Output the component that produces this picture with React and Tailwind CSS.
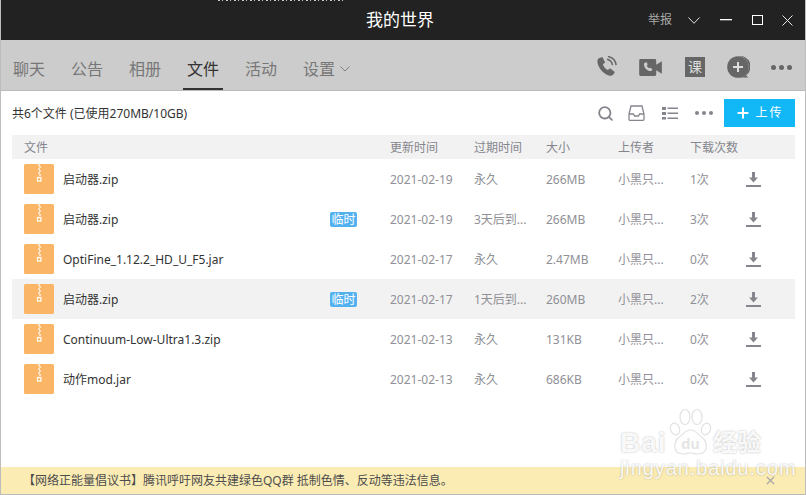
import React from 'react'
import { Search, Plus, X } from 'lucide-react'

const font = 'font-["Noto_Sans","Noto_Sans_CJK_SC",sans-serif]'

const tabs = ['聊天', '公告', '相册', '文件', '活动']

const files = [
    { name: '启动器.zip', date: '2021-02-19', expire: '永久', size: '266MB', count: '1次' },
    { name: '启动器.zip', temp: true, date: '2021-02-19', expire: '3天后到...', size: '266MB', count: '3次' },
    { name: 'OptiFine_1.12.2_HD_U_F5.jar', date: '2021-02-17', expire: '永久', size: '2.47MB', count: '0次' },
    { name: '启动器.zip', temp: true, date: '2021-02-17', expire: '1天后到...', size: '260MB', count: '2次', active: true },
    { name: 'Continuum-Low-Ultra1.3.zip', date: '2021-02-13', expire: '永久', size: '131KB', count: '0次' },
    { name: '动作mod.jar', date: '2021-02-13', expire: '永久', size: '686KB', count: '0次' },
]

const ZipIcon = () => (
    <svg width="30" height="30" viewBox="0 0 30 30" className="shrink-0">
        <rect width="30" height="30" rx="1.5" fill="#fab666" />
        <path d="M14 0h2v2h-2zM15 2h2v2h-2zM14 4h2v2h-2zM15 6h2v2h-2zM14 8h2v2h-2zM15 10h2v2h-2z" fill="#fde3c4" />
        <rect x="13.500" y="13.500" width="3.400" height="3.600" fill="none" stroke="#fff" strokeWidth="1.200" />
    </svg>
)

const DownloadIcon = () => (
    <svg width="15" height="15" viewBox="0 0 15 15" fill="#85858d">
        <path d="M6 0h3v5.500h3L7.500 10.500 3 5.500h3z" />
        <rect x="0" y="13" width="15" height="2" />
    </svg>
)

const ThreeDots = ({ color, size }) => (
    <div className="flex items-center gap-[3px]">
        {[0, 1, 2].map((i) => (
            <span key={i} className={`rounded-full ${color} ${size}`} />
        ))}
    </div>
)

const FileRow = ({ file }) => (
    <div className={`grid h-10 grid-cols-[378px_84px_72px_72px_72px_55px_1fr] items-center text-xs text-[#909096] ${file.active ? 'bg-[#f2f2f2]' : ''}`}>
        <div className="flex items-center pl-3 pr-[33px]">
            <ZipIcon />
            <span className="ml-[9px] pt-[2px] text-[#333]">{file.name}</span>
            {file.temp && (
                <span className="ml-auto rounded-[2px] bg-[#54b1f0] px-[1.5px] text-xs leading-[15px] text-white">临时</span>
            )}
        </div>
        <div className="pt-[2px]">{file.date}</div>
        <div className="pt-[2px]">{file.expire}</div>
        <div className="pt-[2px]">{file.size}</div>
        <div className="pt-[2px]">小黑只...</div>
        <div className="pt-[2px]">{file.count}</div>
        <div className="pl-[1px]">
            <DownloadIcon />
        </div>
    </div>
)

const Watermark = () => (
    <div className="pointer-events-none absolute left-[619px] top-[408px] flex h-[70px] w-[146px] flex-col text-white/90 [text-shadow:0_0_2px_rgba(0,0,0,0.3)]">
        <div className="flex h-[48px] items-end">
            <span className="w-[49px] font-['Liberation_Sans',sans-serif] text-[28px] leading-[26px] font-bold tracking-[1px]">Bai</span>
            <div className="relative h-[48px] w-[43px]">
                <svg width="43" height="48" viewBox="0 0 43 48" fill="#fff" stroke="#e2e2e2" strokeWidth="1.200">
                    <ellipse cx="6" cy="21" rx="4.500" ry="6" transform="rotate(-20 6 21)" />
                    <ellipse cx="16" cy="9" rx="5" ry="7.500" />
                    <ellipse cx="28" cy="9" rx="5" ry="7.500" />
                    <ellipse cx="37" cy="21" rx="4.500" ry="6" transform="rotate(20 37 21)" />
                    <path d="M21.500 22c5 0 7 4 11 7 6 4 8 17-4 17-3 0-5-1-7-1s-4 1-7 1c-12 0-10-13-4-17 4-3 6-7 11-7z" />
                </svg>
                <span className="absolute inset-x-0 bottom-[2px] text-center font-['Liberation_Sans',sans-serif] text-[15px] leading-[20px] font-bold text-[#e4e4e4] [text-shadow:none]">du</span>
            </div>
            <span className="ml-[1px] text-[24px] leading-[28px] font-bold">经验</span>
        </div>
        <span className="mt-[2px] whitespace-nowrap font-['Liberation_Sans',sans-serif] text-[20px] leading-[20px] tracking-[0.9px]">jingyan.baidu.com</span>
    </div>
)

const App = () => {
    return (
        <div className={`relative flex h-[495px] w-[806px] flex-col overflow-hidden border-x border-[#bdbdbd] bg-white ${font}`}>
            <header className="relative flex h-10 shrink-0 items-center justify-end bg-[#222222] pr-[12px] text-white">
                <svg width="127" height="1" viewBox="0 0 127 1" className="absolute left-[217px] top-0">
                    <line x1="0" y1="0.500" x2="127" y2="0.500" stroke="#c8c8c8" strokeDasharray="2 2 1 3" />
                </svg>
                <div className="absolute inset-x-0 pr-[6px] text-center text-[17px]">我的世界</div>
                <span className="mr-[16px] text-xs text-[#a8a8a8]">举报</span>
                <svg width="12" height="7" viewBox="0 0 12 7" fill="none" stroke="#e0e0e0" className="mr-[20px]">
                    <path d="M.5.500 6 6.300 11.500.500" />
                </svg>
                <svg width="12" height="2" viewBox="0 0 12 2" className="mr-[20px]">
                    <rect width="12" height="1.300" fill="#fff" />
                </svg>
                <svg width="11" height="10" viewBox="0 0 11 10" fill="none" stroke="#fff" className="mr-[19px]">
                    <rect x=".500" y=".500" width="10" height="9" />
                </svg>
                <svg width="11" height="11" viewBox="0 0 11 11" fill="none" stroke="#e8e8e8">
                    <path d="M.500.500l10 10M10.500.500l-10 10" />
                </svg>
            </header>

            <nav className="flex h-[51px] shrink-0 items-center border-b border-[#bbb] bg-[#cccccc] pl-3 pr-[13px]">
                {tabs.map((tab) => (
                    <div
                        key={tab}
                        className={`relative mr-[26px] flex h-[50px] w-[32px] items-center justify-center pt-[8px] text-base ${tab === '文件' ? 'text-[#333]' : 'text-[#777]'}`}
                    >
                        {tab}
                        {tab === '文件' && <span className="absolute bottom-0 -inset-x-[4px] h-[2px] bg-[#333]" />}
                    </div>
                ))}
                <div className="flex items-center pt-[8px] text-base text-[#777]">
                    设置
                    <svg width="10" height="6" viewBox="0 0 10 6" fill="none" stroke="#808080" className="ml-[5px]">
                        <path d="M.500.500 5 5 9.500.500" />
                    </svg>
                </div>

                <div className="ml-auto mt-[4px] flex items-center gap-[21px] text-[#666]">
                    <svg width="22" height="22" viewBox="0 0 24 24" fill="#666">
                        <path d="M3 2.500 7 1l3 6-2.500 2c.8 2.800 2.600 5 5.500 6.300l2.300-2 5.200 4.200c-1 2.800-3.300 4.800-5.800 4C8.500 20 2 12.500 1.500 6.500 1.400 5 2 3.500 3 2.500z" />
                        <path d="M12 3.500c3.500.8 5.500 3 6 6.500M13 .5c5 1 8.500 4.500 9 9.500" fill="none" stroke="#666" strokeWidth="1.600" />
                    </svg>
                    <svg width="24" height="17" viewBox="0 0 25 18" className="mr-[1px]">
                        <path d="M1.500 0h15A1.500 1.500 0 0 1 18 1.500V6l6-3.500v13L18 12v4.500a1.500 1.500 0 0 1-1.500 1.500h-15A1.500 1.500 0 0 1 0 16.500v-15A1.500 1.500 0 0 1 1.500 0z" fill="#666" />
                        <path d="M6 4 8 3.500l1 2.500-1 1c.4 1.300 1.300 2.300 2.500 2.800l1-.8 2.500 2c-.5 1.200-1.500 2-2.800 1.700C7.500 12 5 8.500 5 5.500 5 5 5.500 4.300 6 4z" fill="#ccc" />
                    </svg>
                    <div className="mr-[1px] flex h-5 w-5 items-center justify-center bg-[#666] text-sm leading-none text-[#ddd]">课</div>
                    <svg width="23" height="23" viewBox="0 0 23 23">
                        <path d="M11 0a10.800 10.800 0 1 1 0 21.600h10.500L19 19.500A10.800 10.800 0 0 0 11 0z" fill="#666" />
                        <circle cx="11" cy="11" r="10.800" fill="#666" />
                        <path d="M11 6v10M6 11h10" stroke="#ddd" strokeWidth="2" />
                    </svg>
                    <ThreeDots color="bg-[#666]" size="h-[5px] w-[5px]" />
                </div>
            </nav>

            <main className="flex-1">
                <div className="flex h-[44px] items-center pl-[11px] pr-[10px]">
                    <span className="pt-[2px] text-xs text-[#333]">共6个文件 (已使用270MB/10GB)</span>
                    <div className="ml-auto flex items-center">
                        <Search size={17} strokeWidth={2.6} className="mr-[14px] text-[#85858d]" />
                        <svg width="17" height="16" viewBox="0 0 17 16" fill="none" stroke="#85858d" strokeWidth="1.300" className="mr-[17px]">
                            <path d="M3 1h11l2 8v5.500a.8.8 0 0 1-.8.8H1.800a.8.8 0 0 1-.8-.8V9z" />
                            <path d="M1 9h4.500l1 2h4l1-2H16" />
                        </svg>
                        <svg width="16" height="13" viewBox="0 0 16 13" fill="#85858d" className="mr-[17px]">
                            <path d="M0 0h4v3H0zM5.500 0.500H16v1.500H5.500zM0 5h4v3H0zM5.500 5.500H16V7H5.500zM0 10h4v2.500H0zM5.500 10.500H16V12H5.500z" />
                        </svg>
                        <ThreeDots color="bg-[#85858d]" size="h-[4px] w-[4px]" />
                        <button type="button" className="ml-[11px] flex h-7 w-[71px] items-center justify-center bg-[#12b7f5] text-xs text-white">
                            <Plus size={16} strokeWidth={3} className="mr-[4px]" />
                            <span className="tracking-[2px]">上传</span>
                        </button>
                    </div>
                </div>

                <div className="ml-[11px] mr-[10px]">
                    <div className="grid h-6 grid-cols-[378px_84px_72px_72px_72px_1fr] items-center bg-[#f2f2f2] pt-[1px] text-xs text-[#85858d]">
                        <div className="pl-3">文件</div>
                        <div>更新时间</div>
                        <div>过期时间</div>
                        <div>大小</div>
                        <div>上传者</div>
                        <div>下载次数</div>
                    </div>
                    {files.map((file, idx) => (
                        <FileRow key={idx} file={file} />
                    ))}
                </div>
            </main>

            <footer className="flex h-7 shrink-0 items-center justify-between border-b border-[#bbb] bg-[#fbecb4] pl-[22px] pr-[28px] text-xs text-[#4d4d4d]">
                <span>【网络正能量倡议书】腾讯呼吁网友共建绿色QQ群 抵制色情、反动等违法信息。</span>
                <X size={13} strokeWidth={2.4} className="text-[#a9a9a9]" />
            </footer>

            <Watermark />
        </div>
    )
}

export default App
